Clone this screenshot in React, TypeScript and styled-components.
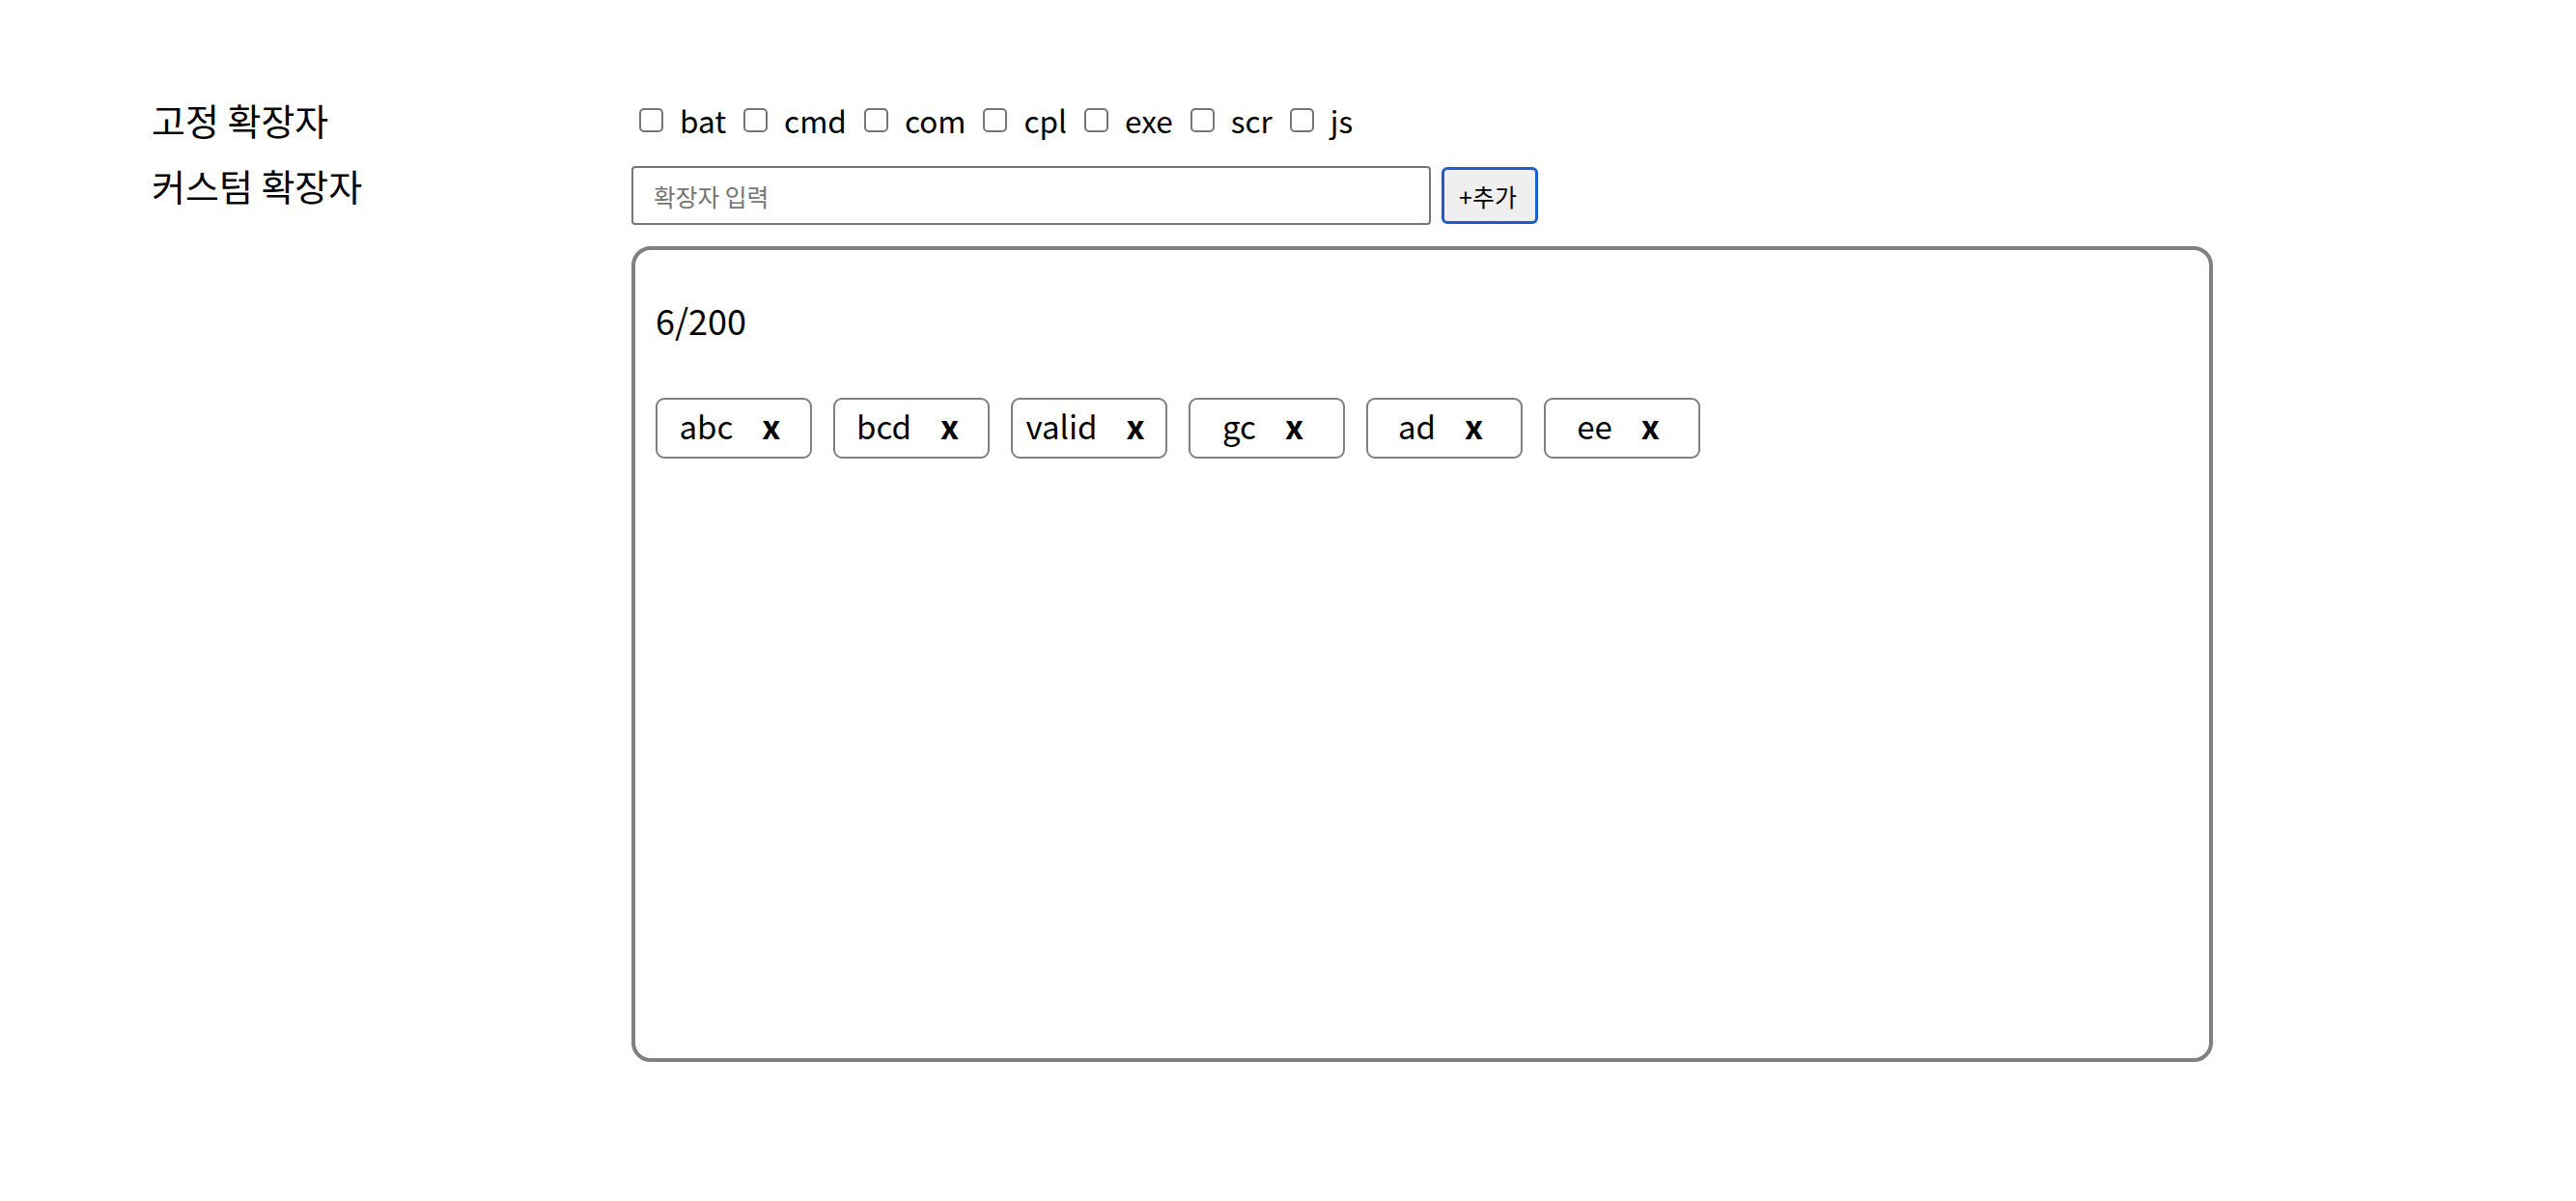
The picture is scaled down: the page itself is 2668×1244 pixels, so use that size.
import React from "react";
import styled, { createGlobalStyle } from "styled-components";

const Global = createGlobalStyle`
  html, body { margin: 0; padding: 0; background: #ffffff; }
  body { font-family: "Noto Sans CJK KR", "Noto Sans", sans-serif; color: #000; }
`;

const Page = styled.div`
  display: grid;
  grid-template-columns: 497px 1fr;
  padding: 98px 0 0 157px;
`;

const Label = styled.div<{ $lh: number }>`
  font-size: 38px;
  line-height: ${(p) => p.$lh}px;
  white-space: nowrap;
`;

const CheckRow = styled.div`
  display: flex;
  align-items: center;
  height: 52px;
  padding-left: 8px;
  margin-bottom: 22px;
`;

const CheckItem = styled.label`
  display: flex;
  align-items: center;
  font-size: 31.5px;
  margin-right: 18px;
`;

const Box = styled.input`
  appearance: none;
  width: 25px;
  height: 25px;
  margin: 0 17px 0 0;
  border: 2px solid #767676;
  border-radius: 5px;
  background: #fff;
  box-sizing: border-box;
`;

const Column = styled.div`
  display: flex;
  flex-direction: column;
`;

const InputRow = styled.div`
  display: flex;
  align-items: center;
  gap: 11px;
  margin-bottom: 22px;
`;

const TextInput = styled.input`
  width: 828px;
  height: 61px;
  box-sizing: border-box;
  border: 2px solid #767676;
  border-radius: 4px;
  padding: 0 21px;
  font-family: "Noto Sans CJK KR", sans-serif;
  font-size: 24.7px;
  outline: none;
  &::placeholder { color: #757575; }
`;

const AddButton = styled.button`
  width: 100px;
  height: 59px;
  box-sizing: border-box;
  background: #efefef;
  border: 3.5px solid #1c5fcc;
  border-radius: 6px;
  font-family: "Noto Sans CJK KR", sans-serif;
  font-size: 25px;
  color: #000;
  padding: 0 4px 0 0;
`;

const ListBox = styled.div`
  width: 1638px;
  height: 845px;
  box-sizing: border-box;
  border: 4px solid #808080;
  border-radius: 20px;
  padding: 37px 19px 0 21px;
`;

const Count = styled.div`
  font-size: 36px;
  line-height: 70px;
  margin-bottom: 46px;
`;

const Chips = styled.div`
  display: flex;
  flex-wrap: wrap;
  gap: 22px;
`;

const Chip = styled.div`
  width: 162px;
  height: 63px;
  box-sizing: border-box;
  border: 2px solid #808080;
  border-radius: 9px;
  display: flex;
  align-items: center;
  justify-content: center;
  gap: 30px;
  font-size: 33px;
  padding: 0 8px 6px 0;
`;

const Remove = styled.span`
  font-weight: 700;
  font-size: 34px;
`;

const fixed = ["bat", "cmd", "com", "cpl", "exe", "scr", "js"];
const custom = ["abc", "bcd", "valid", "gc", "ad", "ee"];

export default function App() {
  return (
    <>
      <Global />
      <Page>
        <Label $lh={52}>고정 확장자</Label>
        <CheckRow>
          {fixed.map((f) => (
            <CheckItem key={f}>
              <Box type="checkbox" />
              {f}
            </CheckItem>
          ))}
        </CheckRow>
        <Label $lh={40}>커스텀 확장자</Label>
        <Column>
          <InputRow>
            <TextInput placeholder="확장자 입력" />
            <AddButton>+추가</AddButton>
          </InputRow>
          <ListBox>
            <Count>6/200</Count>
            <Chips>
              {custom.map((c) => (
                <Chip key={c}>
                  <span>{c}</span>
                  <Remove>x</Remove>
                </Chip>
              ))}
            </Chips>
          </ListBox>
        </Column>
      </Page>
    </>
  );
}
